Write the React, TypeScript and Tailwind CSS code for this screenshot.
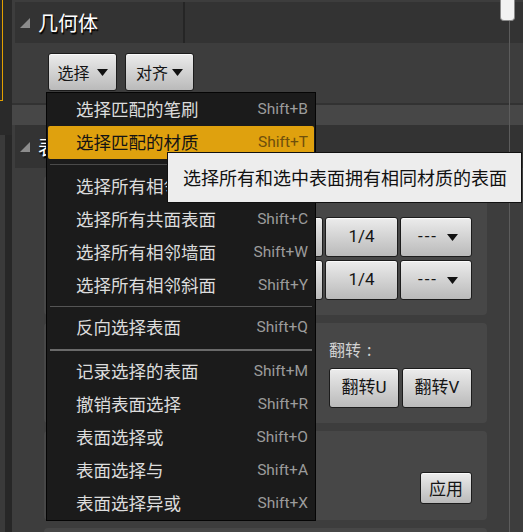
import React from 'react';

const CJK = "font-['Noto_Sans_CJK_SC',sans-serif]";
const LATIN = "font-['Roboto','Noto_Sans_CJK_SC',sans-serif]";

function Caret() {
  return (
    <svg width="11" height="7" viewBox="0 0 11 7">
      <polygon points="0,0 11,0 5.5,7" fill="#111" />
    </svg>
  );
}

function Collapse() {
  return (
    <svg width="10" height="10" viewBox="0 0 10 10">
      <polygon points="10,0 10,10 0,10" fill="#8c8c8c" />
    </svg>
  );
}

function Btn({ children, className = '' }: { children?: React.ReactNode; className?: string }) {
  return (
    <div
      className={`flex items-center justify-center rounded-[3px] border border-[#1c1c1c] bg-linear-to-b from-[#ececec] to-[#bababa] text-[#151515] shadow-[inset_0_1px_0_#fafafa] ${className}`}
    >
      {children}
    </div>
  );
}

interface Item {
  label: string;
  shortcut: string;
  active?: boolean;
}

function MenuItem({ label, shortcut, active }: Item) {
  return (
    <div
      className={`flex h-[33px] items-center justify-between pl-[28px] pr-[6px] ${
        active ? 'rounded-[2px] bg-[#dfa10e]' : ''
      }`}
    >
      <span className={`text-[17.5px] ${active ? 'text-[#141414]' : 'text-[#dcdcdc]'}`}>{label}</span>
      <span className={`${LATIN} text-[15.5px] ${active ? 'text-[#6e4f0c]' : 'text-[#9c9c9c]'}`}>{shortcut}</span>
    </div>
  );
}

function Separator({ h, line }: { h: string; line: string }) {
  return (
    <div className={`flex ${h} items-center px-[2px]`}>
      <div className={`w-full ${line}`} />
    </div>
  );
}

export default function App() {
  return (
    <div className={`relative flex h-[532px] w-[523px] overflow-hidden bg-[#3d3d3d] ${CJK}`}>
      {/* left strip */}
      <div className="flex w-[12px] shrink-0 flex-col bg-[#2a2a2a]">
        <div className="h-[101px] w-[3px] border-r border-b border-[#e3a000]" />
        <div className="h-[34px]" />
        <div className="flex flex-1">
          <div className="w-[5px] bg-[#3a3a3a]" />
          <div className="flex-1 bg-[#272727]" />
        </div>
      </div>

      {/* main column */}
      <div className="flex flex-1 flex-col pt-[2px]">
        <div className="ml-[3px] flex h-[41px] shrink-0 bg-[#333333]">
          <div className="flex w-[168px] items-center gap-[8px] pl-[5px]">
            <Collapse />
            <span className="text-[20px] text-white [text-shadow:1px_2px_1px_#000]">几何体</span>
          </div>
          <div className="w-[2px] bg-[#252525]" />
        </div>

        <div className="flex h-[60px] shrink-0 gap-[8px] pl-[36px] pt-[10px]">
          <Btn className="h-[38px] w-[69px] gap-[7px] text-[16px]">
            选择
            <Caret />
          </Btn>
          <Btn className="h-[38px] w-[69px] gap-[4px] text-[16px]">
            对齐
            <Caret />
          </Btn>
        </div>
        <div className="h-[2px] shrink-0 bg-[#323232]" />
        <div className="h-[20px] shrink-0 bg-[#474747]" />

        <div className="ml-[3px] flex h-[43px] shrink-0 items-center gap-[8px] bg-[#333333] pl-[5px]">
          <Collapse />
          <span className="text-[20px] text-white [text-shadow:1px_2px_1px_#000]">表面属性</span>
        </div>

        <div className="flex w-[475px] flex-col gap-[8px] pl-[32px] pt-[8px]">
          <div className="flex h-[139px] shrink-0 flex-col items-end gap-[3px] rounded-[4px] bg-[#474747] pr-[15px] pt-[41px]">
            {[0, 1].map((i) => (
              <div key={i} className={`flex gap-[2px] ${LATIN} text-[17px]`}>
                <Btn className="h-[40px] w-[72px]">1/4</Btn>
                <Btn className="h-[40px] w-[73px]">1/4</Btn>
                <Btn className="h-[40px] w-[72px] gap-[9px] pl-[4px]">
                  <span className="tracking-[2px]">---</span>
                  <Caret />
                </Btn>
              </div>
            ))}
          </div>

          <div className="flex h-[100px] shrink-0 justify-end rounded-[4px] bg-[#474747] pr-[15px] pt-[16px]">
            <div className="flex w-[143px] flex-col">
              <div className="flex h-[20px] items-center text-[16px] text-[#d2d2d2]">
                翻转<span className="ml-[6px]">:</span>
              </div>
              <div className={`mt-[9px] flex gap-[3px] ${LATIN} text-[17px]`}>
                <Btn className="h-[40px] w-[70px]">翻转U</Btn>
                <Btn className="h-[40px] w-[70px]">翻转V</Btn>
              </div>
            </div>
          </div>

          <div className="flex h-[89px] shrink-0 justify-end rounded-[4px] bg-[#474747] pr-[15px] pt-[41px]">
            <Btn className="h-[32px] w-[52px] text-[17px]">应用</Btn>
          </div>

          <div className="h-[40px] shrink-0 rounded-[4px] bg-[#474747]" />
        </div>
      </div>

      {/* scrollbar */}
      <div className="absolute left-[500px] top-0 h-[21px] w-[15px] rounded-b-[4px] border border-t-0 border-[#8a8a8a] bg-[#f2f2f2]" />
      <div className="absolute bottom-0 left-[509px] top-[21px] w-px bg-[#5c5c5c]" />

      {/* dropdown menu */}
      <div className="absolute left-[46px] top-[92px] w-[270px] border border-[#050505] bg-[#1b1b1b] px-px">
        <MenuItem label="选择匹配的笔刷" shortcut="Shift+B" />
        <MenuItem label="选择匹配的材质" shortcut="Shift+T" active />
        <Separator h="h-[11px]" line="h-px bg-[#4a4a4a]" />
        <MenuItem label="选择所有相邻表面" shortcut="Shift+J" />
        <MenuItem label="选择所有共面表面" shortcut="Shift+C" />
        <MenuItem label="选择所有相邻墙面" shortcut="Shift+W" />
        <MenuItem label="选择所有相邻斜面" shortcut="Shift+Y" />
        <Separator h="h-[9px]" line="h-px bg-[#555555]" />
        <MenuItem label="反向选择表面" shortcut="Shift+Q" />
        <Separator h="h-[11px]" line="h-[2px] bg-[#6a6a6a]" />
        <MenuItem label="记录选择的表面" shortcut="Shift+M" />
        <MenuItem label="撤销表面选择" shortcut="Shift+R" />
        <MenuItem label="表面选择或" shortcut="Shift+O" />
        <MenuItem label="表面选择与" shortcut="Shift+A" />
        <MenuItem label="表面选择异或" shortcut="Shift+X" />
      </div>

      {/* tooltip */}
      <div className="absolute left-[167px] top-[152px] flex h-[51px] w-[355px] items-center border border-[#111] bg-[#ededed] pl-[15px] text-[18px] text-[#111]">
        选择所有和选中表面拥有相同材质的表面
      </div>
    </div>
  );
}
